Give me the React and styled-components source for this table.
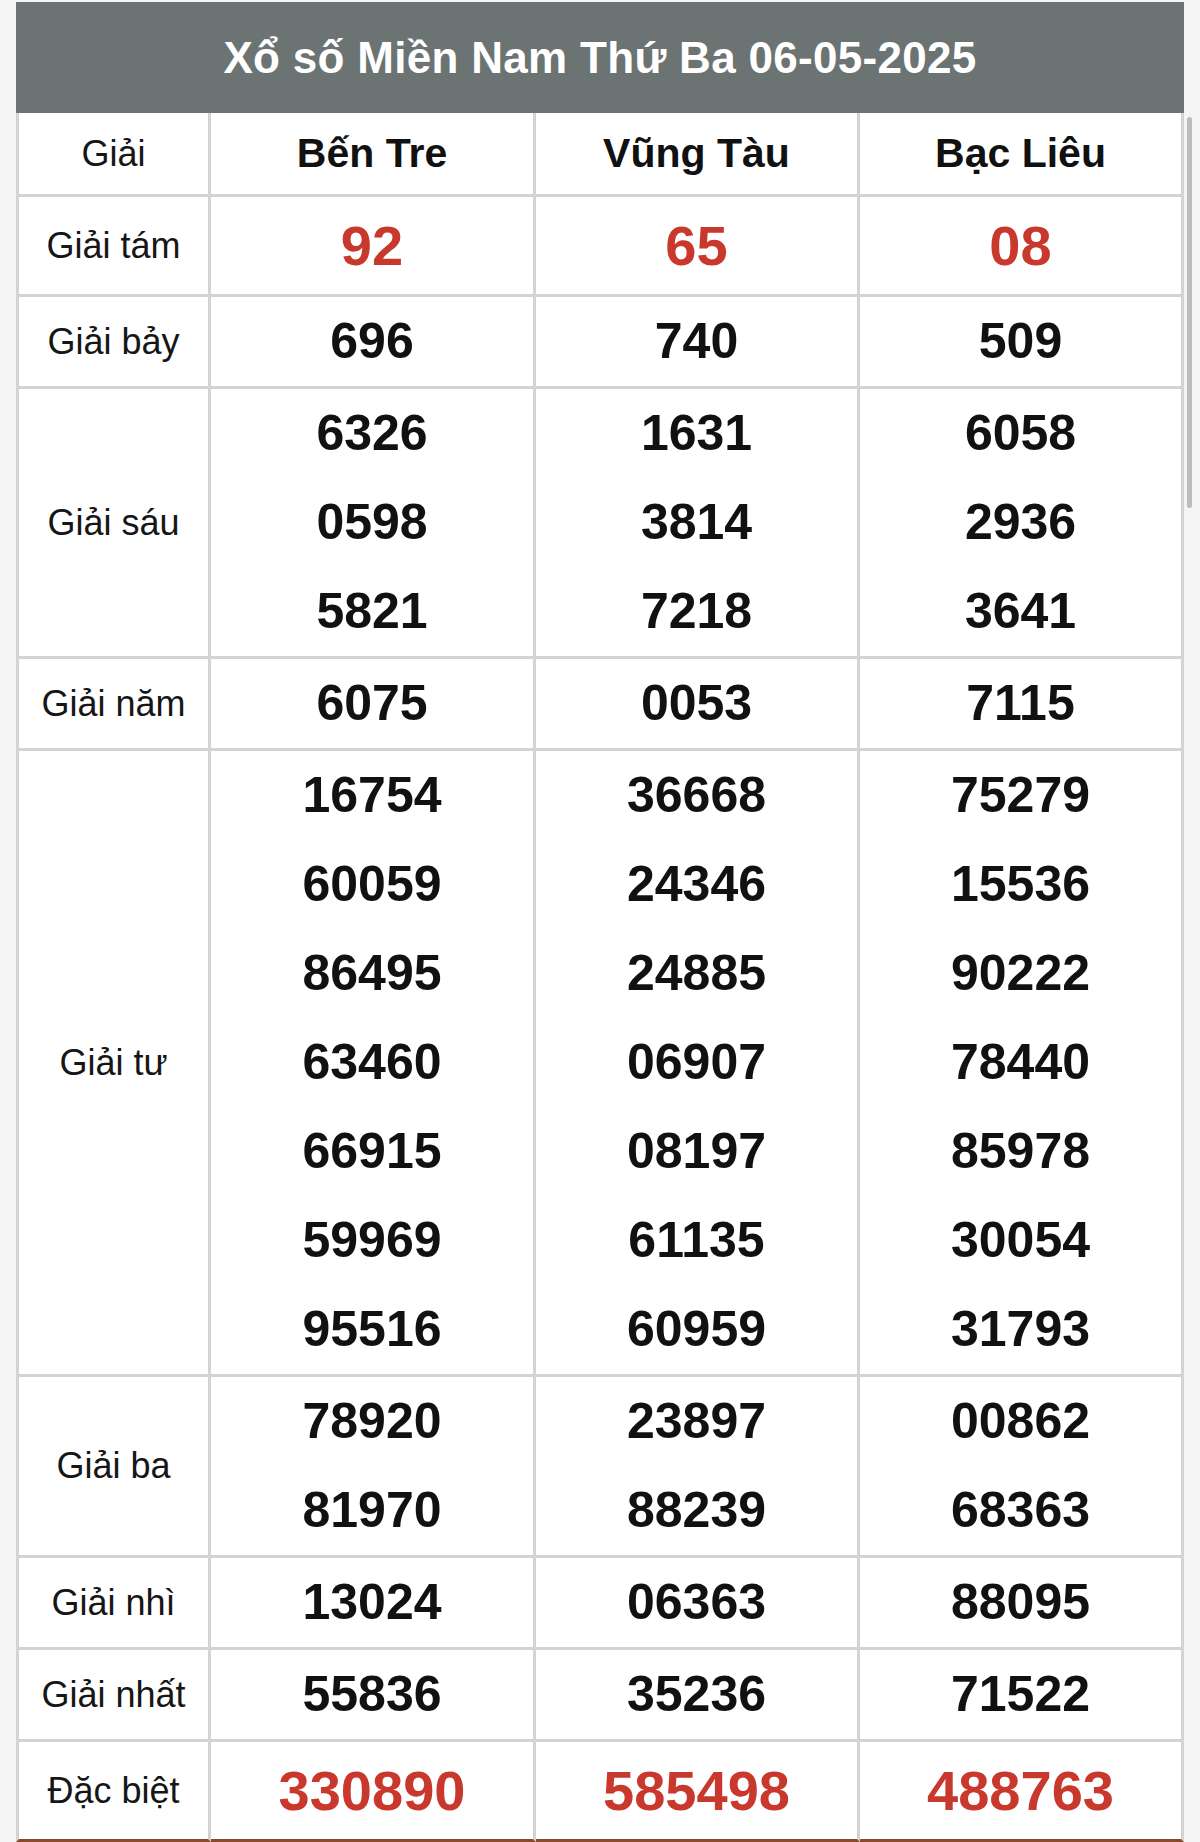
import React from "react";
import styled, { createGlobalStyle } from "styled-components";

const RED = "#c9382d";
const LINE = "#d3d3d3";
const FONT = `"Liberation Sans", Arial, Helvetica, sans-serif`;

const PROVINCES = ["Bến Tre", "Vũng Tàu", "Bạc Liêu"];

const PRIZES = [
  { label: "Giải tám", big: true, values: [["92"], ["65"], ["08"]] },
  { label: "Giải bảy", values: [["696"], ["740"], ["509"]] },
  {
    label: "Giải sáu",
    values: [
      ["6326", "0598", "5821"],
      ["1631", "3814", "7218"],
      ["6058", "2936", "3641"],
    ],
  },
  { label: "Giải năm", values: [["6075"], ["0053"], ["7115"]] },
  {
    label: "Giải tư",
    values: [
      ["16754", "60059", "86495", "63460", "66915", "59969", "95516"],
      ["36668", "24346", "24885", "06907", "08197", "61135", "60959"],
      ["75279", "15536", "90222", "78440", "85978", "30054", "31793"],
    ],
  },
  {
    label: "Giải ba",
    values: [
      ["78920", "81970"],
      ["23897", "88239"],
      ["00862", "68363"],
    ],
  },
  { label: "Giải nhì", values: [["13024"], ["06363"], ["88095"]] },
  { label: "Giải nhất", values: [["55836"], ["35236"], ["71522"]] },
  { label: "Đặc biệt", big: true, last: true, values: [["330890"], ["585498"], ["488763"]] },
];

const GlobalStyle = createGlobalStyle`
  * { box-sizing: border-box; }
  html, body {
    margin: 0;
    padding: 0;
    background: #f5f5f5;
    font-family: ${FONT};
  }
`;

const Page = styled.div`
  position: relative;
  width: 1200px;
  height: 1842px;
  overflow: hidden;
  padding: 2px 0 0 16px;
`;

const Board = styled.div`
  width: 1168px;
  background: #fff;
`;

const Title = styled.h1`
  margin: 0;
  height: 111px;
  display: flex;
  align-items: center;
  justify-content: center;
  background: #6c7373;
  color: #fff;
  font-size: 44px;
  font-weight: 700;
  letter-spacing: 0.3px;
`;

const Grid = styled.div`
  display: grid;
  grid-template-columns: 195px 325px 324px 324px;
`;

const Cell = styled.div`
  display: flex;
  flex-direction: column;
  align-items: center;
  justify-content: center;
  border-right: 3px solid ${LINE};
  border-bottom: 3px solid ${(p) => (p.$last ? "#8a4a2b" : LINE)};
  &:nth-child(4n + 1) {
    border-left: 3px solid ${LINE};
  }
`;

const Label = styled.span`
  font-size: 36px;
  color: #161616;
`;

const Province = styled.span`
  height: 81px;
  line-height: 81px;
  font-size: 41px;
  font-weight: 700;
  color: #111;
`;

const Number = styled.span`
  height: ${(p) => (p.$big ? 97 : 89)}px;
  line-height: ${(p) => (p.$big ? 97 : 89)}px;
  font-size: ${(p) => (p.$big ? 56 : 50)}px;
  font-weight: 700;
  color: ${(p) => (p.$big ? RED : "#111")};
`;

const ScrollThumb = styled.div`
  position: absolute;
  left: 1187px;
  top: 117px;
  width: 5px;
  height: 391px;
  border-radius: 3px;
  background: #bdbdbd;
`;

export default function App() {
  return (
    <>
      <GlobalStyle />
      <Page>
        <Board>
          <Title>Xổ số Miền Nam Thứ Ba 06-05-2025</Title>
          <Grid>
            <Cell>
              <Label>Giải</Label>
            </Cell>
            {PROVINCES.map((name) => (
              <Cell key={name}>
                <Province>{name}</Province>
              </Cell>
            ))}
            {PRIZES.map((prize) => (
              <React.Fragment key={prize.label}>
                <Cell $last={prize.last}>
                  <Label>{prize.label}</Label>
                </Cell>
                {prize.values.map((list, i) => (
                  <Cell key={i} $last={prize.last}>
                    {list.map((n, j) => (
                      <Number key={j} $big={prize.big}>
                        {n}
                      </Number>
                    ))}
                  </Cell>
                ))}
              </React.Fragment>
            ))}
          </Grid>
        </Board>
        <ScrollThumb />
      </Page>
    </>
  );
}
